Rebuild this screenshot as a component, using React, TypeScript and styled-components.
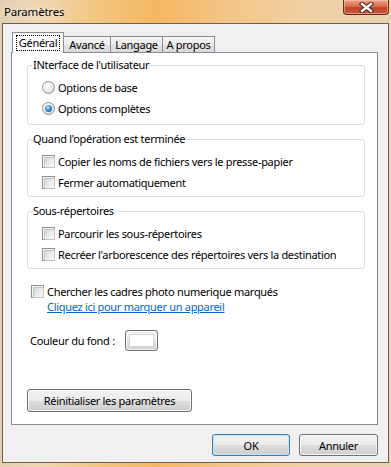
import React from "react";
import styled, { createGlobalStyle } from "styled-components";

const GlobalStyle = createGlobalStyle`
  html, body { margin: 0; padding: 0; background: #fff; }
  body {
    font-family: "Noto Sans", "Open Sans", sans-serif;
    font-size: 11px;
    letter-spacing: -0.3px;
    color: #000;
  }
  * { box-sizing: border-box; }
`;

const Window = styled.div`
  width: 391px;
  height: 467px;
  display: flex;
  flex-direction: column;
  padding: 0 2px 4px 2px;
  background: linear-gradient(
    90deg,
    #e3cfb2 0%,
    #f0d7b1 10%,
    #f3c47f 26%,
    #f5b862 40%,
    #f3c588 58%,
    #f1d0a2 78%,
    #e8d2b2 100%
  );
`;

const TitleBar = styled.div`
  height: 23px;
  display: flex;
  align-items: flex-start;
  justify-content: space-between;
`;

const Title = styled.span`
  padding: 4px 0 0 2px;
  font-size: 11.5px;
  letter-spacing: -0.2px;
  line-height: 15px;
  text-shadow: 0 0 6px rgba(255, 255, 255, 0.9);
`;

const CloseButton = styled.div`
  width: 46px;
  height: 15px;
  display: flex;
  align-items: center;
  justify-content: center;
  border: 1px solid #6a2a1c;
  border-top: none;
  border-radius: 0 0 4px 4px;
  background: linear-gradient(#e9a48b 0%, #d76c50 45%, #c2442a 55%, #c9583b 100%);
  box-shadow: inset 0 0 0 1px rgba(255, 210, 190, 0.5);
`;

const Client = styled.div`
  flex: 1;
  display: flex;
  flex-direction: column;
  border: 1px solid #6f604e;
  background: #f0f0f0;
  padding: 8px 10px 6px 8px;
`;

const TabStrip = styled.div`
  display: flex;
  align-items: flex-end;
  height: 21px;
  padding-left: 1px;
  margin-bottom: -1px;
  position: relative;
  z-index: 1;
`;

const Tab = styled.div<{ $active?: boolean; $w: number }>`
  width: ${(p) => p.$w}px;
  height: ${(p) => (p.$active ? 21 : 16)}px;
  margin-bottom: ${(p) => (p.$active ? 0 : 1)}px;
  margin-left: ${(p) => (p.$active ? 0 : -1)}px;
  display: flex;
  align-items: center;
  justify-content: center;
  padding-bottom: ${(p) => (p.$active ? 1 : 0)}px;
  border: 1px solid #898c95;
  border-bottom: none;
  background: ${(p) =>
    p.$active ? "#fff" : "linear-gradient(#f5f5f5 0%, #ececec 50%, #e3e3e3 51%, #dadada 100%)"};
  &:first-child { margin-left: 0; }
`;

const FocusLabel = styled.span`
  border: 1px dotted #000;
  padding: 0 2px;
  line-height: 14px;
`;

const Panel = styled.div`
  flex: 1;
  display: flex;
  flex-direction: column;
  align-items: stretch;
  background: #fff;
  border: 1px solid #898c95;
  padding: 4px 12px 0 15px;
`;

const Group = styled.fieldset<{ $bottom?: number }>`
  margin: 0;
  min-width: 0;
  padding: 0 0 ${(p) => p.$bottom ?? 3}px 0;
  border: 1px solid #d5dfe5;
  border-radius: 3px;
  & + & { margin-top: 6px; }
`;

const Legend = styled.legend`
  margin-left: 4px;
  padding: 0 1px;
  line-height: 16px;
`;

const Rows = styled.div<{ $top?: number }>`
  padding: ${(p) => p.$top ?? 4}px 0 0 14px;
`;

const Row = styled.div<{ $h?: number; $indent?: number; $top?: number }>`
  display: flex;
  align-items: center;
  gap: 3px;
  height: ${(p) => p.$h ?? 21}px;
  margin-left: ${(p) => p.$indent ?? 0}px;
  margin-top: ${(p) => p.$top ?? 0}px;
`;

const Radio = styled.span<{ $checked?: boolean }>`
  width: 13px;
  height: 13px;
  flex: none;
  border-radius: 50%;
  border: 1px solid #8e8f8f;
  background: radial-gradient(circle at 35% 30%, #ffffff 0%, #e8e8e8 55%, #c9c9c9 100%);
  display: flex;
  align-items: center;
  justify-content: center;
  &::after {
    content: "";
    width: 7px;
    height: 7px;
    border-radius: 50%;
    display: ${(p) => (p.$checked ? "block" : "none")};
    background: radial-gradient(circle at 40% 35%, #b5e8ff 0%, #3d94d6 45%, #164d7c 100%);
  }
`;

const Check = styled.span`
  width: 13px;
  height: 13px;
  flex: none;
  border: 1px solid #8e8f8f;
  background: #f7f7f7;
  padding: 1px;
  &::after {
    content: "";
    display: block;
    width: 100%;
    height: 100%;
    border: 1px solid #c4c4c4;
    background: linear-gradient(135deg, #d6d6d6 0%, #eeeeee 60%, #fafafa 100%);
  }
`;

const Link = styled.a`
  display: block;
  margin-left: 20px;
  line-height: 15px;
  color: #0066cc;
  text-decoration: underline;
  cursor: pointer;
`;

const ColorLabel = styled.span`
  width: 92px;
`;

const Button = styled.button<{ $w: number; $h?: number; $default?: boolean }>`
  width: ${(p) => p.$w}px;
  height: ${(p) => p.$h ?? 22}px;
  margin: 0;
  padding: 0;
  font: inherit;
  letter-spacing: inherit;
  color: #000;
  border: 1px solid ${(p) => (p.$default ? "#3c7fb1" : "#707070")};
  border-radius: 3px;
  background: linear-gradient(#f2f2f2 0%, #ebebeb 50%, #dddddd 51%, #cfcfcf 100%);
  box-shadow: inset 0 0 0 1px ${(p) => (p.$default ? "rgba(190, 228, 250, 0.9)" : "rgba(255, 255, 255, 0.75)")};
`;

const ColorButton = styled(Button)`
  display: flex;
  padding: 3px;
`;

const Swatch = styled.span`
  flex: 1;
  background: #fff;
  border: 1px solid #d8d8d8;
`;

const ResetButton = styled(Button)`
  align-self: flex-start;
  margin-top: 38px;
`;

const Footer = styled.div`
  display: flex;
  justify-content: flex-end;
  gap: 9px;
  margin-top: 9px;
`;

export default function App() {
  return (
    <>
      <GlobalStyle />
      <Window>
        <TitleBar>
          <Title>Paramètres</Title>
          <CloseButton>
            <svg width="15" height="11" viewBox="0 0 15 11">
              <path d="M3 2 L12 9 M12 2 L3 9" stroke="#4a1d14" strokeWidth="4.4" strokeLinecap="square" />
              <path d="M3 2 L12 9 M12 2 L3 9" stroke="#fff" strokeWidth="2.4" strokeLinecap="square" />
            </svg>
          </CloseButton>
        </TitleBar>
        <Client>
          <TabStrip>
            <Tab $active $w={52}>
              <FocusLabel>Général</FocusLabel>
            </Tab>
            <Tab $w={48}>Avancé</Tab>
            <Tab $w={53}>Langage</Tab>
            <Tab $w={53}>A propos</Tab>
          </TabStrip>
          <Panel>
            <Group $bottom={5}>
              <Legend>INterface de l'utilisateur</Legend>
              <Rows $top={4}>
                <Row>
                  <Radio />
                  <span>Options de base</span>
                </Row>
                <Row>
                  <Radio $checked />
                  <span>Options complètes</span>
                </Row>
              </Rows>
            </Group>
            <Group>
              <Legend>Quand l'opération est terminée</Legend>
              <Rows>
                <Row>
                  <Check />
                  <span>Copier les noms de fichiers vers le presse-papier</span>
                </Row>
                <Row>
                  <Check />
                  <span>Fermer automatiquement</span>
                </Row>
              </Rows>
            </Group>
            <Group>
              <Legend>Sous-répertoires</Legend>
              <Rows>
                <Row>
                  <Check />
                  <span>Parcourir les sous-répertoires</span>
                </Row>
                <Row>
                  <Check />
                  <span>Recréer l'arborescence des répertoires vers la destination</span>
                </Row>
              </Rows>
            </Group>
            <Row $h={15} $indent={4} $top={15}>
              <Check />
              <span>Chercher les cadres photo numerique marqués</span>
            </Row>
            <Link>Cliquez ici pour marquer un appareil</Link>
            <Row $indent={3} $top={16}>
              <ColorLabel>Couleur du fond :</ColorLabel>
              <ColorButton $w={33} $h={21}>
                <Swatch />
              </ColorButton>
            </Row>
            <ResetButton $w={165} $h={23}>
              Réinitialiser les paramètres
            </ResetButton>
          </Panel>
          <Footer>
            <Button $w={78} $default>
              OK
            </Button>
            <Button $w={79}>Annuler</Button>
          </Footer>
        </Client>
      </Window>
    </>
  );
}
